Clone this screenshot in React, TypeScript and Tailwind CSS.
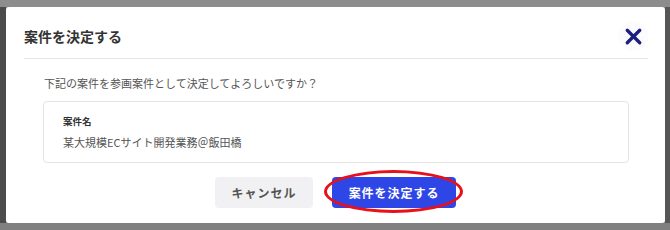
import { X } from 'lucide-react';

const jp = "font-['Noto_Sans_CJK_JP','Noto_Sans',sans-serif]";

export default function App() {
  return (
    <div className={`flex h-[230px] w-[670px] flex-col overflow-hidden bg-[#8a8a8a] ${jp}`}>
      {/* backdrop top */}
      <div className="h-[7px] shrink-0 bg-[#8d8d8d]" />

      <div className="flex shrink-0">
        <div className="w-[6px] bg-[#4b4b4b]" />

        {/* Modal */}
        <div className="flex h-[216px] w-[659px] flex-col rounded-[3px] bg-white">
          <div className="flex h-[51px] items-center justify-between pl-[18px] pr-[17px] pt-[7px]">
            <h2 className="text-[14px] leading-[18px] font-bold text-[#333]">案件を決定する</h2>
            <button className="flex h-[30px] w-[30px] items-center justify-center rounded-full bg-[#fcfcfe] text-[#1c1f7e]">
              <X size={25} strokeWidth={3.2} />
            </button>
          </div>
          <div className="mx-[18px] mr-[17px] border-t border-[#e6e6e6]" />

          <div className="flex flex-col pl-[37px] pr-[36px] pt-[16px]">
            <p className="pl-[1px] text-[11px] leading-[16px] text-[#555]">
              下記の案件を参画案件として決定してよろしいですか？
            </p>
            <div className="mt-[10px] flex h-[62px] flex-col rounded-[4px] border border-[#e4e4e4] pl-[19px] pt-[12px]">
              <span className="text-[9.5px] leading-[14px] font-bold text-[#333]">案件名</span>
              <span className="mt-[6px] text-[11px] leading-[16px] text-[#555]">某大規模ECサイト開発業務＠飯田橋</span>
            </div>
          </div>

          <div className="mt-[14px] flex justify-center gap-[19px]">
            <button className="h-[31px] w-[98px] rounded-[4px] bg-[#f1f1f3] text-[12px] font-bold tracking-[0.08em] text-[#555]">
              キャンセル
            </button>
            <div className="relative">
              <button className="h-[31px] w-[124px] rounded-[4px] bg-[#2f46e6] text-[12px] font-bold tracking-[0.08em] text-white">
                案件を決定する
              </button>
              <div className="pointer-events-none absolute left-[-8px] top-[-7px] h-[43px] w-[139px] rounded-[50%] border-[3px] border-[#e8101a]" />
            </div>
          </div>
        </div>

        <div className="w-[5px] bg-[#565656]" />
      </div>

      {/* backdrop bottom */}
      <div className="flex-1 bg-[#808080] pl-[64px] pt-[1px]">
        <span className="text-[12px] leading-[16px] text-[#333]">（入力なし）</span>
      </div>
    </div>
  );
}
